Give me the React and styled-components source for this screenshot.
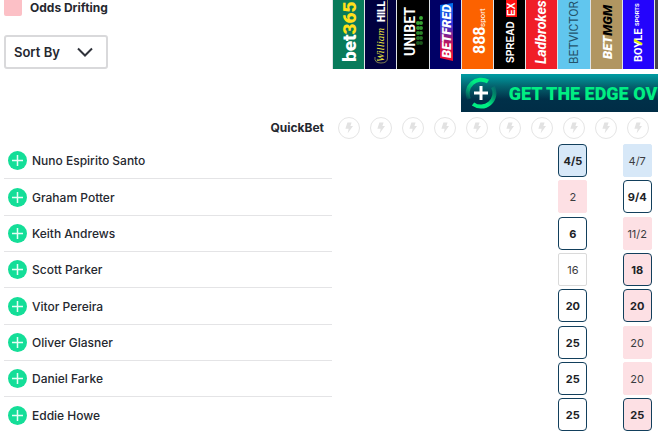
import React from "react";
import styled, { createGlobalStyle } from "styled-components";

const GlobalStyle = createGlobalStyle`
  html {
    scrollbar-width: none;
  }
  body {
    margin: 0;
    background: #fff;
    color: #25282f;
    font-family: "Inter", "Liberation Sans", sans-serif;
    font-size: 13px;
  }
`;

const Page = styled.main`
  padding-left: 4px;
`;

const OddsTable = styled.table`
  width: 100%;
  table-layout: fixed;
  border-collapse: separate;
  border-spacing: 0;

  th,
  td {
    padding: 0;
  }
`;

const NameCol = styled.col`
  width: 328px;
`;
const EdgeCol = styled.col`
  width: 4px;
`;

const Tools = styled.td`
  vertical-align: top;
`;
const Legend = styled.div`
  display: flex;
  align-items: center;
  gap: 8px;
  height: 16px;
  margin-bottom: 19px;
  font-size: 12px;
  line-height: 14px;
  font-weight: 700;
`;
const Swatch = styled.span`
  width: 18px;
  height: 16px;
  border-radius: 0 0 2px 2px;
  background: #fcc0c6;
`;

const SortBox = styled.div`
  display: inline-grid;
  align-items: center;
  width: 104px;
  height: 34px;

  > * {
    grid-area: 1 / 1;
  }
`;
const SortSelect = styled.select`
  appearance: none;
  width: 100%;
  height: 100%;
  padding: 0 8px;
  border: 2px solid #d9d9db;
  border-radius: 3px;
  background: #fff;
  color: #25282f;
  font: 600 13px "Inter", "Liberation Sans", sans-serif;
`;
const Chevron = styled.svg`
  justify-self: end;
  width: 16px;
  height: 10px;
  margin-right: 15px;
  pointer-events: none;
`;

const LogoCell = styled.th`
  height: 69px;
  border-left: 1px solid #dfe3e6;
  background: ${(p) => p.$bg};
  vertical-align: top;
`;
const Logo = styled.svg`
  display: block;
  width: 31px;
  height: 69px;
  margin: 0 auto;
`;

const BannerCell = styled.td`
  height: 43px;
  vertical-align: bottom;
`;
const Banner = styled.a`
  display: flex;
  align-items: center;
  gap: 12px;
  height: 38px;
  padding-left: 4px;
  overflow: hidden;
  background: linear-gradient(#009da3, #04646f 32%, #003049 66%, #002d46);
  color: #00ee83;
  font: 900 18px "Roboto", "Liberation Sans", sans-serif;
  text-decoration: none;
  white-space: nowrap;
`;
const BannerIcon = styled.svg`
  flex: none;
  width: 32px;
  height: 32px;
`;

const QuickLabel = styled.th`
  height: 31px;
  text-align: right;
  font-size: 12px;
  font-weight: 700;

  span {
    margin-right: 8px;
  }
`;
const QuickCell = styled.td`
  border-left: 1px solid transparent;
  text-align: center;
`;
const QuickButton = styled.button`
  display: inline-flex;
  align-items: center;
  justify-content: center;
  width: 22px;
  height: 22px;
  padding: 0;
  border: 1px solid #e5e5e5;
  border-radius: 50%;
  background: #fff;
  vertical-align: middle;
`;

const Row = styled.tr`
  height: 36px;

  &:nth-child(3n + 2) {
    height: 37px;
  }
`;
const NameCell = styled.th`
  border-bottom: 1px solid #e4e4e6;
  font-size: 12px;
  font-weight: 500;
  text-align: left;
`;
const NameLine = styled.div`
  display: flex;
  align-items: center;
  gap: 5px;
  padding-left: 4px;
`;
const AddButton = styled.button`
  display: flex;
  width: 19px;
  height: 19px;
  padding: 0;
  border: 0;
  border-radius: 50%;
  background: #14de98;
`;

const OddsCell = styled.td`
  vertical-align: top;
`;
const tones = { blue: "#d7e8f8", pink: "#fde0e4", white: "#fff" };
const OddsButton = styled.button`
  display: block;
  width: 29px;
  height: 33px;
  margin: 1px 0 0 1px;
  padding: 0;
  border: 1px solid
    ${(p) => (p.$best ? "#123f5c" : p.$tone === "white" ? "#dadada" : tones[p.$tone])};
  border-radius: ${(p) => (p.$best ? 4 : 2)}px;
  background: ${(p) => tones[p.$tone]};
  color: ${(p) => (p.$best ? "#202226" : "#3a3c40")};
  font: ${(p) => (p.$best ? 700 : 400)} 11px "Inter", "Liberation Sans", sans-serif;
`;

// every bookmaker name reads from the bottom of the strip to the top
function Side({ x, y, children, ...rest }) {
  return (
    <text transform={`translate(${x} ${y}) rotate(-90)`} fill="#fff" fontFamily="Roboto" {...rest}>
      {children}
    </text>
  );
}

const bookmakers = [
  {
    name: "bet365",
    bg: "#087b5b",
    logo: (
      <Side x={23} y={62} fontSize="19" fontWeight="900">
        bet<tspan fill="#ffe01b">365</tspan>
      </Side>
    ),
  },
  {
    name: "William Hill",
    bg: "#00003f",
    logo: (
      <>
        <Side x={19} y={62} fontSize="11" fontStyle="italic" fontWeight="400" fontFamily="Liberation Serif" fill="#e8e53c">
          William
        </Side>
        <Side x={20} y={22} fontSize="10" fontWeight="900">HILL</Side>
        <path d="M22.5 0V58Q22.5 63 16 63Q9 63 10 57" fill="none" stroke="#b5b25a" strokeWidth="0.7" />
      </>
    ),
  },
  {
    name: "Unibet",
    bg: "#000",
    logo: (
      <>
        <Side x={18} y={56} fontSize="14" fontWeight="700">UNIBET</Side>
        {[18, 23, 28, 33, 38, 43].map((y, i) => (
          <g key={y} fill={["#3aaa35", "#36a231", "#31962d", "#2b8528", "#246f22", "#1c561b"][i]}>
            {i > 0 && <circle cx="21" cy={y} r="2" />}
            <circle cx="24" cy={y} r="2" />
          </g>
        ))}
      </>
    ),
  },
  {
    name: "Betfred",
    bg: "#000066",
    logo: (
      <>
        <defs>
          <linearGradient id="betfred" x1="0" y1="0" x2="0" y2="1">
            <stop offset="0" stopColor="#0074f0" />
            <stop offset="0.35" stopColor="#2630d8" />
            <stop offset="0.7" stopColor="#c0145c" />
            <stop offset="1" stopColor="#f0102e" />
          </linearGradient>
        </defs>
        <path d="M10 5L23 3V61L10 58Z" fill="url(#betfred)" />
        <Side x={21} y={58} fontSize="13" fontWeight="900" fontStyle="italic">BETFRED</Side>
      </>
    ),
  },
  {
    name: "888sport",
    bg: "#fc6200",
    logo: (
      <>
        <Side x={23} y={54} fontSize="16" fontWeight="700">888</Side>
        <Side x={23} y={27} fontSize="8" fontWeight="400">sport</Side>
      </>
    ),
  },
  {
    name: "Spreadex",
    bg: "#000",
    logo: (
      <>
        <rect x="12" y="0" width="11" height="17" fill="#ff1010" />
        <Side x={20} y={63} fontSize="10" fontWeight="700" fontFamily="Liberation Sans">SPREAD</Side>
        <Side x={21} y={16} fontSize="10" fontWeight="700" fontFamily="Liberation Sans">EX</Side>
      </>
    ),
  },
  {
    name: "Ladbrokes",
    bg: "#f01e28",
    logo: (
      <Side x={20} y={64} fontSize="14" fontWeight="700" fontStyle="italic">Ladbrokes</Side>
    ),
  },
  {
    name: "BetVictor",
    bg: "#61c6ee",
    logo: (
      <Side x={20} y={64} fontSize="12" fontWeight="400" fill="#24536b">BETVICTOR</Side>
    ),
  },
  {
    name: "BetMGM",
    bg: "#b19661",
    logo: (
      <Side x={21} y={59} fontSize="13" fontWeight="900" fontStyle="italic">
        BET<tspan fill="#000">MGM</tspan>
      </Side>
    ),
  },
  {
    name: "BoyleSports",
    bg: "#2404fc",
    logo: (
      <>
        <Side x={19} y={62} fontSize="11" fontWeight="700">BOYLE</Side>
        <path d="M11 40L19 44" stroke="#dff000" strokeWidth="2" />
        <Side x={16} y={26} fontSize="6">SPORTS</Side>
      </>
    ),
  },
];

const white = "white";
const managers = [
  { name: "Nuno Espirito Santo", odds: { BetVictor: ["4/5", "blue", true], BoyleSports: ["4/7", "blue"] } },
  { name: "Graham Potter", odds: { BetVictor: ["2", "pink"], BoyleSports: ["9/4", white, true] } },
  { name: "Keith Andrews", odds: { BetVictor: ["6", white, true], BoyleSports: ["11/2", "pink"] } },
  { name: "Scott Parker", odds: { BetVictor: ["16", white], BoyleSports: ["18", "pink", true] } },
  { name: "Vitor Pereira", odds: { BetVictor: ["20", white, true], BoyleSports: ["20", "pink", true] } },
  { name: "Oliver Glasner", odds: { BetVictor: ["25", white, true], BoyleSports: ["20", "pink"] } },
  { name: "Daniel Farke", odds: { BetVictor: ["25", white, true], BoyleSports: ["20", "pink"] } },
  { name: "Eddie Howe", odds: { BetVictor: ["25", white, true], BoyleSports: ["25", "pink", true] } },
];

function BookmakerRow() {
  return (
    <tr>
      <Tools>
        <Legend>
          <Swatch />
          Odds Drifting
        </Legend>
        <SortBox>
          <SortSelect aria-label="Sort By">
            <option>Sort By</option>
          </SortSelect>
          <Chevron viewBox="0 0 16 10" fill="none" stroke="#30333b" strokeWidth="2">
            <path d="M1 1.5L8 8.5L15 1.5" />
          </Chevron>
        </SortBox>
      </Tools>
      {bookmakers.map((b) => (
        <LogoCell key={b.name} $bg={b.bg} scope="col" aria-label={b.name}>
          <Logo viewBox="0 0 31 69">{b.logo}</Logo>
        </LogoCell>
      ))}
      <LogoCell $bg="#47454a" />
    </tr>
  );
}

function BannerRow() {
  return (
    <tr>
      <td colSpan={5} />
      <BannerCell colSpan={7}>
        <Banner href="#">
          <BannerIcon viewBox="0 0 32 32" fill="none">
            <defs>
              <linearGradient id="ringLeft" x1="1" y1="0" x2="0" y2="1">
                <stop offset="0.4" stopColor="#00ee83" />
                <stop offset="1" stopColor="#00ee83" stopOpacity="0.1" />
              </linearGradient>
              <linearGradient id="ringRight" x1="0" y1="1" x2="1" y2="0">
                <stop offset="0.4" stopColor="#00ee83" />
                <stop offset="1" stopColor="#00ee83" stopOpacity="0.1" />
              </linearGradient>
            </defs>
            <path d="M23 4.5A13.5 13.5 0 0 0 4 22" stroke="url(#ringLeft)" strokeWidth="4" />
            <path d="M8 27A13.5 13.5 0 0 0 28 10" stroke="url(#ringRight)" strokeWidth="4" />
            <path d="M16 9V23M9 16H23" stroke="#fff" strokeWidth="3" />
          </BannerIcon>
          GET THE EDGE OVER
        </Banner>
      </BannerCell>
    </tr>
  );
}

function QuickBetRow() {
  return (
    <tr>
      <QuickLabel scope="row">
        <span>QuickBet</span>
      </QuickLabel>
      {bookmakers.map((b) => (
        <QuickCell key={b.name}>
          <QuickButton aria-label={`QuickBet ${b.name}`}>
            <svg width="10" height="12" viewBox="0 0 10 12" fill="#e2e2e2">
              <path d="M3.4 0.6H7.6L6.4 4H9L3.6 11.6L4.7 6.8H1.4Z" />
            </svg>
          </QuickButton>
        </QuickCell>
      ))}
      <td />
    </tr>
  );
}

function ManagerRow({ name, odds }) {
  return (
    <Row>
      <NameCell scope="row">
        <NameLine>
          <AddButton aria-label={`Add ${name}`}>
            <svg width="19" height="19" viewBox="0 0 19 19" stroke="#e9fff6" strokeWidth="1.5">
              <path d="M9.5 4V15M4 9.5H15" />
            </svg>
          </AddButton>
          {name}
        </NameLine>
      </NameCell>
      {bookmakers.map((b) => {
        const price = odds[b.name];
        return (
          <OddsCell key={b.name}>
            {price && (
              <OddsButton $tone={price[1]} $best={price[2]}>
                {price[0]}
              </OddsButton>
            )}
          </OddsCell>
        );
      })}
      <td />
    </Row>
  );
}

function App() {
  return (
    <>
      <GlobalStyle />
      <Page>
        <OddsTable>
          <colgroup>
            <NameCol />
            {bookmakers.map((b) => (
              <col key={b.name} />
            ))}
            <EdgeCol />
          </colgroup>
          <thead>
            <BookmakerRow />
            <BannerRow />
            <QuickBetRow />
          </thead>
          <tbody>
            {managers.map((m) => (
              <ManagerRow key={m.name} {...m} />
            ))}
          </tbody>
        </OddsTable>
      </Page>
    </>
  );
}

export default App;
